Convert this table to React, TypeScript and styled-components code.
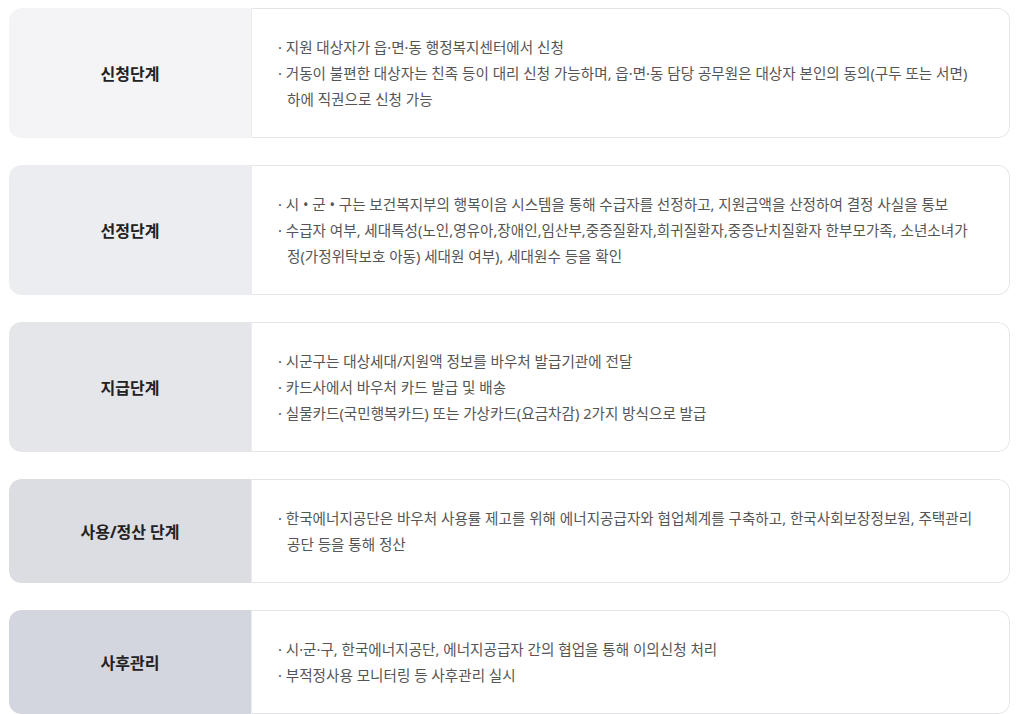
import React from 'react';
import styled, { createGlobalStyle } from 'styled-components';

type Step = {
  title: string;
  tone: string;
  lines: string[];
};

const steps: Step[] = [
  {
    title: '신청단계',
    tone: '#f4f4f6',
    lines: [
      '· 지원 대상자가 읍·면·동 행정복지센터에서 신청',
      '· 거동이 불편한 대상자는 친족 등이 대리 신청 가능하며, 읍·면·동 담당 공무원은 대상자 본인의 동의(구두 또는 서면) 하에 직권으로 신청 가능',
    ],
  },
  {
    title: '선정단계',
    tone: '#ecedf1',
    lines: [
      '· 시 • 군 • 구는 보건복지부의 행복이음 시스템을 통해 수급자를 선정하고, 지원금액을 산정하여 결정 사실을 통보',
      '· 수급자 여부, 세대특성(노인,영유아,장애인,임산부,중증질환자,희귀질환자,중증난치질환자 한부모가족, 소년소녀가정(가정위탁보호 아동) 세대원 여부), 세대원수 등을 확인',
    ],
  },
  {
    title: '지급단계',
    tone: '#e5e6ea',
    lines: [
      '· 시군구는 대상세대/지원액 정보를 바우처 발급기관에 전달',
      '· 카드사에서 바우처 카드 발급 및 배송',
      '· 실물카드(국민행복카드) 또는 가상카드(요금차감) 2가지 방식으로 발급',
    ],
  },
  {
    title: '사용/정산 단계',
    tone: '#dcdde2',
    lines: [
      '· 한국에너지공단은 바우처 사용률 제고를 위해 에너지공급자와 협업체계를 구축하고, 한국사회보장정보원, 주택관리공단 등을 통해 정산',
    ],
  },
  {
    title: '사후관리',
    tone: '#d3d6de',
    lines: [
      '· 시·군·구, 한국에너지공단, 에너지공급자 간의 협업을 통해 이의신청 처리',
      '· 부적정사용 모니터링 등 사후관리 실시',
    ],
  },
];

export default function App() {
  return (
    <>
      <GlobalStyle />
      <List>
        {steps.map((step) => (
          <Row key={step.title}>
            <Label $tone={step.tone}>{step.title}</Label>
            <Body>
              {step.lines.map((line, i) => (
                <Item key={i}>{line}</Item>
              ))}
            </Body>
          </Row>
        ))}
      </List>
    </>
  );
}

const GlobalStyle = createGlobalStyle`
  body {
    margin: 0;
    background: #ffffff;
    font-family: "Noto Sans", "Noto Sans CJK KR", sans-serif;
  }
`;

const List = styled.ul`
  margin: 0;
  padding: 8px 14px 0 9px;
  list-style: none;
  display: flex;
  flex-direction: column;
  gap: 27px;
`;

const Row = styled.li`
  display: grid;
  grid-template-columns: 242px 1fr;
  border-radius: 12px;
  overflow: hidden;
`;

const Label = styled.div<{ $tone: string }>`
  display: flex;
  align-items: center;
  justify-content: center;
  background: ${(p) => p.$tone};
  border-radius: 12px 0 0 12px;
  font-size: 16px;
  font-weight: 700;
  color: #222222;
`;

const Body = styled.div`
  display: flex;
  flex-direction: column;
  justify-content: center;
  padding: 25px 32px 25px 26px;
  border: 1px solid #e4e4e6;
  border-left-color: #ececee;
  border-radius: 0 12px 12px 0;
`;

const Item = styled.p`
  margin: 0;
  padding-left: 9px;
  text-indent: -9px;
  font-size: 14.6px;
  line-height: 26px;
  color: #555555;
`;
